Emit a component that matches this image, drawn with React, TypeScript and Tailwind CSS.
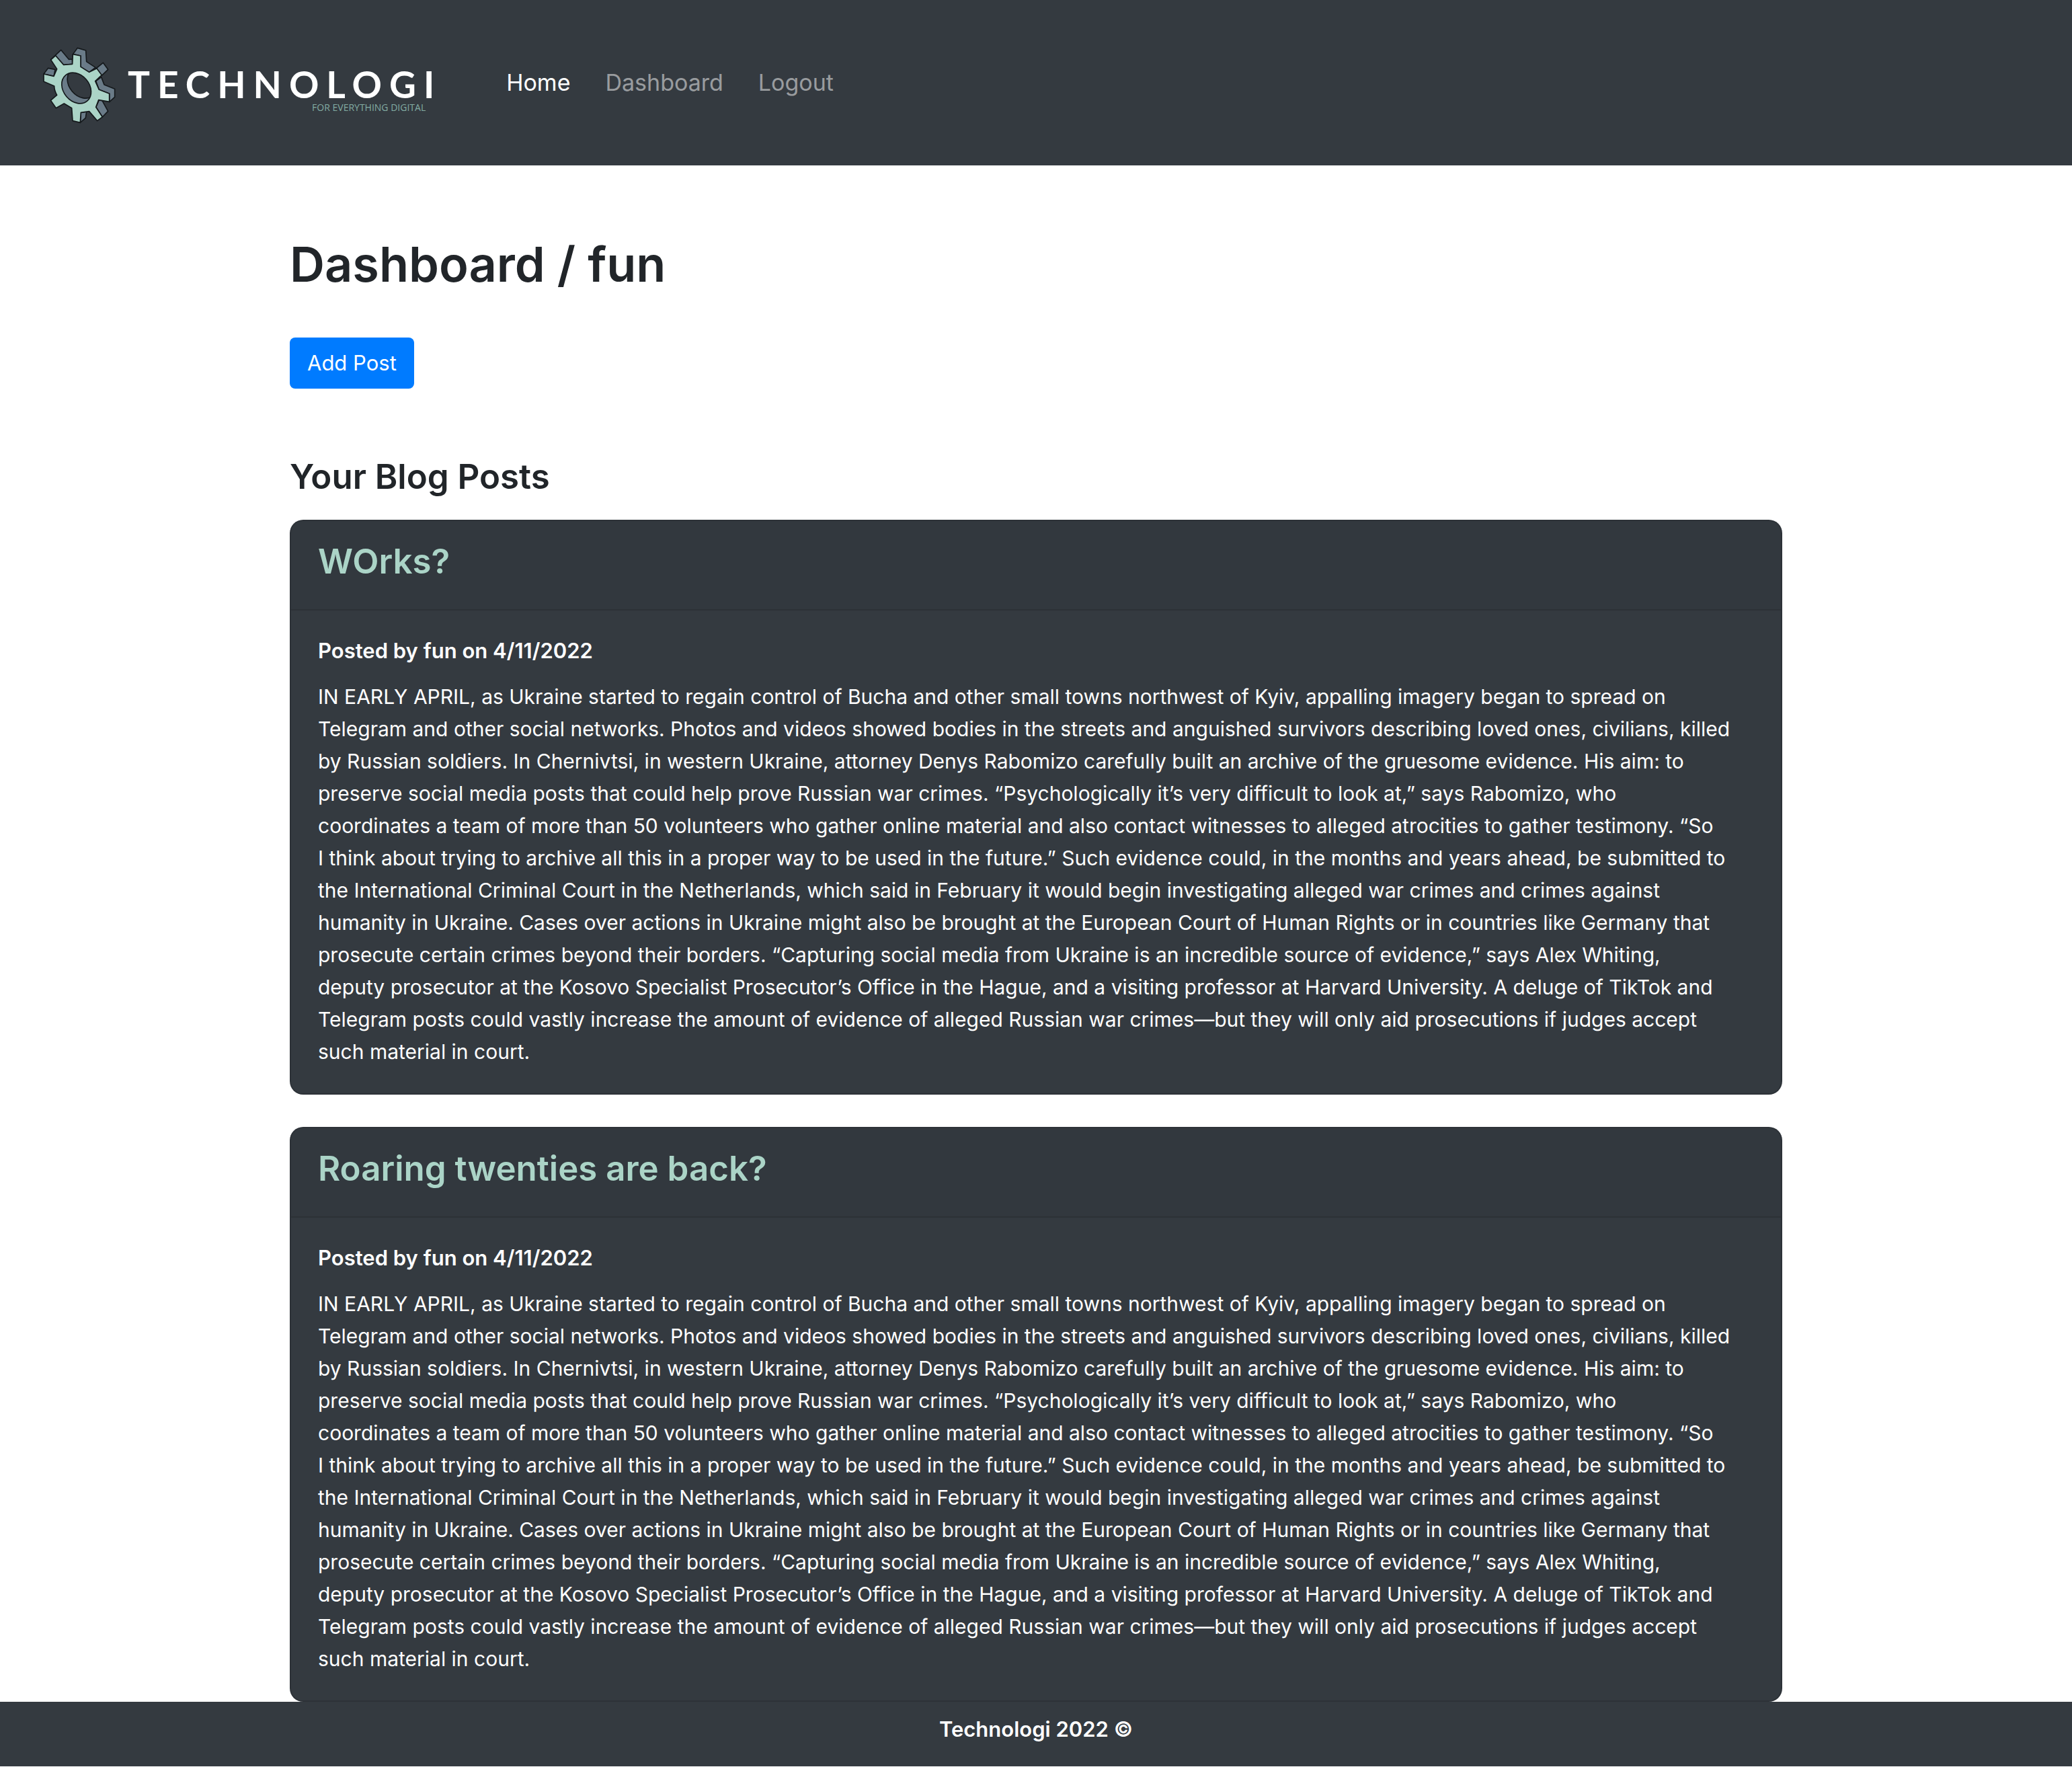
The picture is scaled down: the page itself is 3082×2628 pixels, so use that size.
const articleText = `IN EARLY APRIL, as Ukraine started to regain control of Bucha and other small towns northwest of Kyiv, appalling imagery began to spread on
Telegram and other social networks. Photos and videos showed bodies in the streets and anguished survivors describing loved ones, civilians, killed
by Russian soldiers. In Chernivtsi, in western Ukraine, attorney Denys Rabomizo carefully built an archive of the gruesome evidence. His aim: to
preserve social media posts that could help prove Russian war crimes. “Psychologically it’s very difficult to look at,” says Rabomizo, who
coordinates a team of more than 50 volunteers who gather online material and also contact witnesses to alleged atrocities to gather testimony. “So
I think about trying to archive all this in a proper way to be used in the future.” Such evidence could, in the months and years ahead, be submitted to
the International Criminal Court in the Netherlands, which said in February it would begin investigating alleged war crimes and crimes against
humanity in Ukraine. Cases over actions in Ukraine might also be brought at the European Court of Human Rights or in countries like Germany that
prosecute certain crimes beyond their borders. “Capturing social media from Ukraine is an incredible source of evidence,” says Alex Whiting,
deputy prosecutor at the Kosovo Specialist Prosecutor’s Office in the Hague, and a visiting professor at Harvard University. A deluge of TikTok and
Telegram posts could vastly increase the amount of evidence of alleged Russian war crimes—but they will only aid prosecutions if judges accept
such material in court.`;

const posts = [
  { title: 'WOrks?', author: 'fun', date: '4/11/2022', text: articleText },
  { title: 'Roaring twenties are back?', author: 'fun', date: '4/11/2022', text: articleText },
];

const links = [
  { label: 'Home', active: true },
  { label: 'Dashboard', active: false },
  { label: 'Logout', active: false },
];

function GearLogo() {
  return (
    <svg viewBox="0 0 480 480" className="size-40 shrink-0" aria-hidden="true">
      <defs>
        <clipPath id="gear-hole">
          <ellipse cx="221" cy="243" rx="75" ry="58" transform="rotate(50 221 243)" />
        </clipPath>
      </defs>
      <g fill="#6a7b88" stroke="#15191c" strokeWidth="5" strokeLinejoin="round">
        <path d="M107 116 L152 73 L187 115 L202 114 L203 136 L164 140 Z" />
        <path d="M205 92 L226 64 L263 75 L266 125 L306 151 L278 172 L240 148 L240 99 Z" />
        <path d="M308 156 L340 130 L362 160 L334 187 Z" />
        <path d="M308 212 L332 194 L345 228 L392 247 L392 283 L368 305 L368 268 L322 250 Z" />
        <path d="M308 328 L322 297 L336 299 L362 346 L337 372 Z" />
        <path d="M241 352 L266 348 L262 376 L238 397 Z" />
        <path d="M75 180 L95 154 L126 160 L120 190 Z" />
      </g>
      <path
        fill="#abd4c7"
        stroke="#15191c"
        strokeWidth="5"
        strokeLinejoin="round"
        d="M205 92 L240 99 L240 148 L278 172 L312 155 L334 185 L305 212 L322 250 L368 268 L368 304 L320 296 L308 328 L337 372 L314 389 L278 347 L241 352 L238 397 L204 389 L200 332 L166 312 L130 332 L106 298 L134 274 Q122 254 122 234 L75 214 L75 180 L120 190 L134 158 L107 117 L128 98 L164 139 L203 136 Z"
      />
      <ellipse cx="221" cy="243" rx="75" ry="58" transform="rotate(50 221 243)" fill="#6a7b88" />
      <g clipPath="url(#gear-hole)">
        <ellipse cx="246" cy="220" rx="75" ry="58" transform="rotate(50 246 220)" fill="#343a40" stroke="#15191c" strokeWidth="5" />
      </g>
      <ellipse cx="221" cy="243" rx="75" ry="58" transform="rotate(50 221 243)" fill="none" stroke="#15191c" strokeWidth="5" />
    </svg>
  );
}

function Navbar() {
  return (
    <nav className="flex h-[246px] items-center bg-[#343a40] pl-10">
      <a href="#" className="flex items-center pt-[14px]" aria-label="Technologi, for everything digital">
        <GearLogo />
        <span className="-ml-[10px] flex flex-col items-end pt-1 font-['Lato',sans-serif]">
          <span className="text-[55px] leading-[55px] font-bold tracking-[11px] text-white">TECHNOLOGI</span>
          <span className="pr-6 font-['Open_Sans',sans-serif] text-[14px] leading-[14px] text-[#82aca3]">
            FOR EVERYTHING DIGITAL
          </span>
        </span>
      </a>
      <ul className="ml-24 flex gap-[52px] text-[34px] leading-[54px]">
        {links.map((link) => (
          <li key={link.label}>
            <a href="#" className={link.active ? 'text-white' : 'text-white/50'}>
              {link.label}
            </a>
          </li>
        ))}
      </ul>
    </nav>
  );
}

function PostCard({ post }: { post: (typeof posts)[number] }) {
  return (
    <article className="rounded-[20px] border-2 border-black/12 bg-[#343a40]">
      <header className="rounded-t-[18px] border-b-2 border-black/12 bg-black/3 px-10 pt-[26px] pb-[38px]">
        <h3 className="text-[51px] leading-[67px] font-semibold text-[#abd4c7]">
          <a href="#">{post.title}</a>
        </h3>
      </header>
      <div className="px-10 pt-[41px] pb-[38px] text-white">
        <h4 className="mb-[25px] text-[31px] leading-[38px] font-semibold">
          Posted by {post.author} on {post.date}
        </h4>
        <p className="text-[30px] leading-[48px] whitespace-pre-line">{post.text}</p>
      </div>
    </article>
  );
}

export default function App() {
  return (
    <div className="bg-white font-['Inter',sans-serif] text-[#212529]">
      <Navbar />
      <main className="mx-auto max-w-[2220px]">
        <h1 className="pt-[99px] text-[72px] leading-[96px] font-semibold">Dashboard / fun</h1>
        <button
          type="button"
          className="mt-[61px] rounded-lg bg-[#007bff] px-[26px] py-[14px] text-[31px] leading-[48px] text-white"
        >
          Add Post
        </button>
        <h2 className="mt-[97px] mb-[31px] text-[51px] leading-[67px] font-semibold">Your Blog Posts</h2>
        <div className="flex flex-col gap-12">
          {posts.map((post) => (
            <PostCard key={post.title} post={post} />
          ))}
        </div>
      </main>
      <footer className="bg-[#343a40] pt-[22px] pb-9 text-center text-[31px] leading-[38px] font-semibold text-white">
        Technologi 2022 ©
      </footer>
    </div>
  );
}
